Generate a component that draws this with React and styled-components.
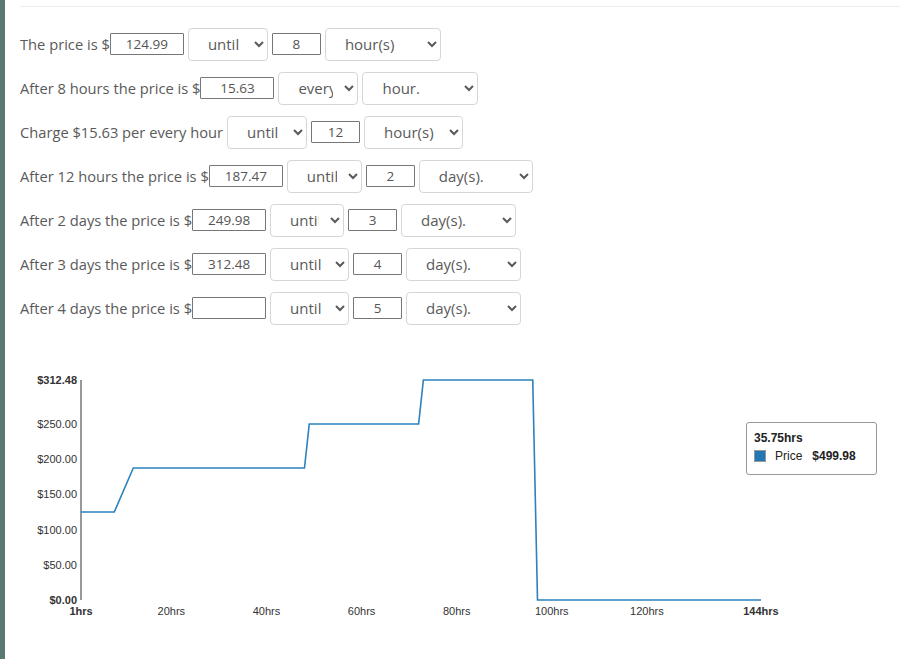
import React from 'react';
import styled, { createGlobalStyle } from 'styled-components';

const GlobalStyle = createGlobalStyle`
  html, body {
    margin: 0;
    padding: 0;
    background: #fff;
  }
  body {
    font-family: "Open Sans", "Liberation Sans", sans-serif;
  }
`;

const Page = styled.div`
  min-height: 659px;
  border-left: 5px solid #5b7874;
  box-sizing: border-box;
  padding: 6px 0 0 15px;
  overflow: hidden;
`;

const Rule = styled.div`
  height: 1px;
  background: #ececec;
  margin-bottom: 15px;
`;

const Form = styled.div`
  display: flex;
  flex-direction: column;
`;

const Row = styled.div`
  display: flex;
  align-items: center;
  height: 44px;
`;

const Label = styled.span`
  font-size: 14.7px;
  color: #5a5a5a;
  white-space: nowrap;
  margin-right: ${(p) => (p.$gap ? 4 : 0)}px;
`;

const PriceInput = styled.input`
  box-sizing: border-box;
  width: ${(p) => p.$w || 74}px;
  height: 22px;
  margin: 0 4px 0 0;
  padding: 0 4px;
  border: 1px solid #767676;
  border-radius: 1px;
  font: 13.5px "Open Sans", "Liberation Sans", sans-serif;
  color: #555;
  text-align: center;
  outline: none;
`;

const Select = styled.select`
  box-sizing: border-box;
  width: ${(p) => p.$w || 80}px;
  height: 33px;
  margin: 0 4px 0 0;
  padding: 0 8px 0 15px;
  border: 1px solid #d6d6d6;
  border-radius: 4px;
  background: #fff;
  font: 15px "Open Sans", "Liberation Sans", sans-serif;
  color: #5a5a5a;
  outline: none;
`;

const ChartWrap = styled.div`
  position: relative;
  width: 880px;
  height: 290px;
  margin-top: 10px;
  margin-left: -15px;
  padding-left: 15px;
`;

const ChartSvg = styled.svg`
  display: block;
  font-family: "Liberation Sans", Arial, sans-serif;
`;

const Tooltip = styled.div`
  position: absolute;
  left: 741px;
  top: 82px;
  width: 131px;
  height: 53px;
  box-sizing: border-box;
  border: 1px solid #999;
  border-radius: 3px;
  background: #fff;
  padding: 8px 7px 0 7px;
  font-family: "Liberation Sans", Arial, sans-serif;
  font-size: 12px;
  color: #222;
`;

const TipTitle = styled.div`
  font-weight: bold;
  margin-bottom: 4px;
`;

const TipRow = styled.div`
  display: flex;
  align-items: center;
  gap: 9px;
`;

const Swatch = styled.span`
  width: 12px;
  height: 12px;
  box-sizing: border-box;
  background: #1f77b4;
  border: 1px solid #999;
`;

const TipValue = styled.span`
  font-weight: bold;
  margin-left: 1px;
`;

const rows = [
  { label: 'The price is $', price: '124.99', mode: 'until', modeW: 80, num: '8', unit: 'hour(s)', unitW: 116 },
  { label: 'After 8 hours the price is $', price: '15.63', mode: 'every', modeW: 80, unit: 'hour.', unitW: 116 },
  { label: 'Charge $15.63 per every hour', mode: 'until', modeW: 80, num: '12', unit: 'hour(s)', unitW: 99, gap: true },
  { label: 'After 12 hours the price is $', price: '187.47', mode: 'until', modeW: 75, num: '2', unit: 'day(s).', unitW: 114 },
  { label: 'After 2 days the price is $', price: '249.98', mode: 'until', modeW: 74, num: '3', unit: 'day(s).', unitW: 115 },
  { label: 'After 3 days the price is $', price: '312.48', mode: 'until', modeW: 79, num: '4', unit: 'day(s).', unitW: 115 },
  { label: 'After 4 days the price is $', price: '', mode: 'until', modeW: 79, num: '5', unit: 'day(s).', unitW: 115 },
];

const x = (h) => 81 + (h - 1) * (680 / 143);
const y = (v) => 600 - v * (220 / 312.48);

const points = [
  [1, 124.99], [8, 124.99], [12, 187.47], [48, 187.47], [49, 249.98],
  [72, 249.98], [73, 312.48], [96, 312.48], [97, 0], [144, 0],
];

const yTicks = [
  { v: 312.48, t: '$312.48', b: true },
  { v: 250, t: '$250.00' },
  { v: 200, t: '$200.00' },
  { v: 150, t: '$150.00' },
  { v: 100, t: '$100.00' },
  { v: 50, t: '$50.00' },
  { v: 0, t: '$0.00', b: true },
];

const xTicks = [
  { h: 1, t: '1hrs', b: true },
  { h: 20, t: '20hrs' },
  { h: 40, t: '40hrs' },
  { h: 60, t: '60hrs' },
  { h: 80, t: '80hrs' },
  { h: 100, t: '100hrs' },
  { h: 120, t: '120hrs' },
  { h: 144, t: '144hrs', b: true },
];

const Chart = () => (
  <ChartWrap>
    <ChartSvg width="880" height="290" viewBox="20 340 880 290">
      <path d="M81,380 V600" stroke="#333" strokeWidth="1" fill="none" />
      {yTicks.map((tk) => (
        <text
          key={tk.t}
          x="77"
          y={y(tk.v) + 4}
          textAnchor="end"
          fontSize="11"
          fontWeight={tk.b ? 'bold' : 'normal'}
          fill="#333"
        >
          {tk.t}
        </text>
      ))}
      {xTicks.map((tk) => (
        <text
          key={tk.t}
          x={x(tk.h)}
          y="615"
          textAnchor="middle"
          fontSize="11"
          fontWeight={tk.b ? 'bold' : 'normal'}
          fill="#333"
        >
          {tk.t}
        </text>
      ))}
      <polyline
        points={points.map(([h, v]) => `${x(h)},${y(v)}`).join(' ')}
        fill="none"
        stroke="#2b82bf"
        strokeWidth="1.6"
      />
    </ChartSvg>
    <Tooltip>
      <TipTitle>35.75hrs</TipTitle>
      <TipRow>
        <Swatch />
        <span>Price</span>
        <TipValue>$499.98</TipValue>
      </TipRow>
    </Tooltip>
  </ChartWrap>
);

const App = () => (
  <Page>
    <GlobalStyle />
    <Rule />
    <Form>
      {rows.map((r, i) => (
        <Row key={i}>
          <Label $gap={r.gap}>{r.label}</Label>
          {r.price !== undefined && <PriceInput defaultValue={r.price} />}
          <Select $w={r.modeW} defaultValue={r.mode}>
            <option value="until">until</option>
            <option value="every">every</option>
          </Select>
          {r.num && <PriceInput $w={49} defaultValue={r.num} />}
          <Select $w={r.unitW} defaultValue={r.unit}>
            <option value={r.unit}>{r.unit}</option>
          </Select>
        </Row>
      ))}
    </Form>
    <Chart />
  </Page>
);

export default App;
